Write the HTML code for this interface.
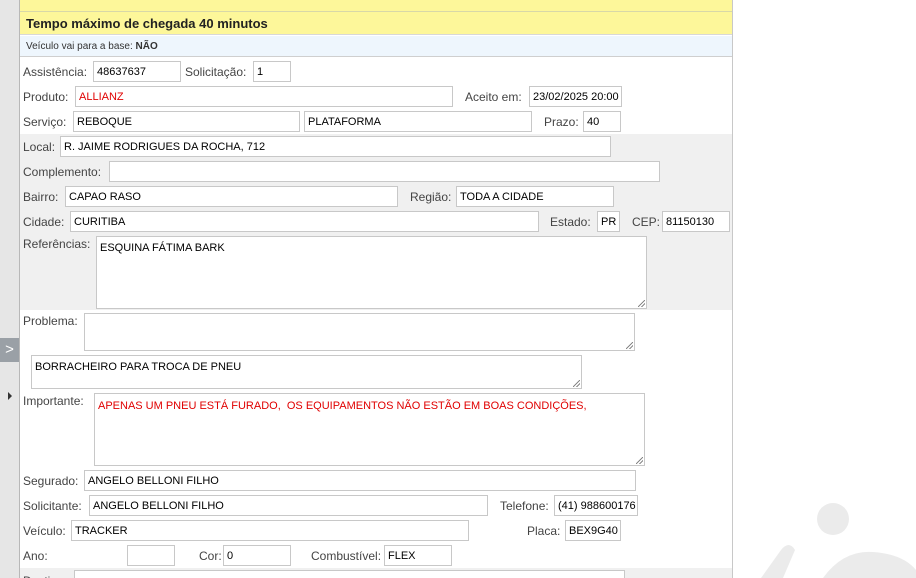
<!DOCTYPE html><html><head><style>
html,body{margin:0;width:916px;height:578px;overflow:hidden}
body{background:#fff;font-family:"Liberation Sans",Tahoma,sans-serif;position:relative}
.a{position:absolute}
.l{position:absolute;font-size:12px;color:#444;line-height:14px}
.i{position:absolute;border:1px solid #c8c8c8;background:#fff;font-size:11px;color:#000;box-sizing:border-box;padding:2px 3px 0;line-height:17px;height:21px;white-space:nowrap;overflow:hidden}
.r{color:#e00000}
.t{height:auto;line-height:13px}
.g{position:absolute;right:1px;bottom:1px;width:7px;height:7px;background:linear-gradient(135deg,transparent 45%,#888 45%,#888 55%,transparent 55%,transparent 70%,#888 70%,#888 80%,transparent 80%)}
</style></head><body>
<div class="a" style="left:0;top:0;width:19px;height:578px;background:#e6e6e6;border-right:1px solid #b8b8b8"></div>
<div class="a" style="left:0;top:338px;width:19px;height:24px;background:#9aa0a6;color:#fff;font-size:15px;text-align:center;line-height:24px">&gt;</div>
<div class="a" style="left:8px;top:392px;width:0;height:0;border-left:4px solid #333;border-top:4px solid transparent;border-bottom:4px solid transparent"></div>
<div class="a" style="left:20px;top:0;width:712px;height:578px;border-right:1px solid #c8c8c8"></div>
<div class="a" style="left:20px;top:0;width:712px;height:11px;background:#fdf79a;border-bottom:1px solid #d8d8a8"></div>
<div class="a" style="left:20px;top:12px;width:712px;height:23px;background:#fdf79a;border-bottom:1px solid #d8d8d8;font-weight:bold;font-size:13px;line-height:23px;color:#222;padding-left:6px;box-sizing:border-box">Tempo máximo de chegada 40 minutos</div>
<div class="a" style="left:20px;top:36px;width:712px;height:21px;background:#eef6fd;border-bottom:1px solid #cfcfcf;font-size:10px;line-height:21px;color:#333;padding-left:6px;box-sizing:border-box">Veículo vai para a base: <b>NÃO</b></div>
<div class="a" style="left:20px;top:134px;width:712px;height:176px;background:#f0f0f0"></div>
<div class="a" style="left:20px;top:568px;width:712px;height:10px;background:#f0f0f0"></div>

<div class="l" style="left:23px;top:65px">Assistência:</div><div class="i" style="left:93px;top:61px;width:88px">48637637</div>
<div class="l" style="left:185px;top:65px">Solicitação:</div><div class="i" style="left:253px;top:61px;width:38px">1</div>
<div class="l" style="left:23px;top:90px">Produto:</div><div class="i r" style="left:75px;top:86px;width:378px">ALLIANZ</div>
<div class="l" style="left:465px;top:90px">Aceito em:</div><div class="i" style="left:529px;top:86px;width:93px">23/02/2025 20:00</div>
<div class="l" style="left:23px;top:115px">Serviço:</div><div class="i" style="left:73px;top:111px;width:227px">REBOQUE</div>
<div class="i" style="left:304px;top:111px;width:228px">PLATAFORMA</div>
<div class="l" style="left:544px;top:115px">Prazo:</div><div class="i" style="left:583px;top:111px;width:38px">40</div>
<div class="l" style="left:23px;top:140px">Local:</div><div class="i" style="left:60px;top:136px;width:551px">R. JAIME RODRIGUES DA ROCHA, 712</div>
<div class="l" style="left:23px;top:165px">Complemento:</div><div class="i" style="left:109px;top:161px;width:551px"></div>
<div class="l" style="left:23px;top:190px">Bairro:</div><div class="i" style="left:65px;top:186px;width:333px">CAPAO RASO</div>
<div class="l" style="left:410px;top:190px">Região:</div><div class="i" style="left:456px;top:186px;width:158px">TODA A CIDADE</div>
<div class="l" style="left:23px;top:215px">Cidade:</div><div class="i" style="left:70px;top:211px;width:469px">CURITIBA</div>
<div class="l" style="left:550px;top:215px">Estado:</div><div class="i" style="left:597px;top:211px;width:23px">PR</div>
<div class="l" style="left:632px;top:215px">CEP:</div><div class="i" style="left:662px;top:211px;width:68px">81150130</div>
<div class="l" style="left:23px;top:237px">Referências:</div><div class="i t" style="left:96px;top:236px;width:551px;height:73px;padding-top:5px">ESQUINA FÁTIMA BARK<div class="g"></div></div>
<div class="l" style="left:23px;top:314px">Problema:</div><div class="i t" style="left:84px;top:313px;width:551px;height:38px"><div class="g"></div></div>
<div class="i t" style="left:31px;top:355px;width:551px;height:34px;padding-top:5px">BORRACHEIRO PARA TROCA DE PNEU<div class="g"></div></div>
<div class="l" style="left:23px;top:394px">Importante:</div><div class="i t r" style="left:94px;top:393px;width:551px;height:73px;padding-top:6px">APENAS UM PNEU ESTÁ FURADO,&nbsp; OS EQUIPAMENTOS NÃO ESTÃO EM BOAS CONDIÇÕES,<div class="g"></div></div>
<div class="l" style="left:23px;top:474px">Segurado:</div><div class="i" style="left:84px;top:470px;width:552px">ANGELO BELLONI FILHO</div>
<div class="l" style="left:23px;top:499px">Solicitante:</div><div class="i" style="left:89px;top:495px;width:399px">ANGELO BELLONI FILHO</div>
<div class="l" style="left:500px;top:499px">Telefone:</div><div class="i" style="left:554px;top:495px;width:84px">(41) 988600176</div>
<div class="l" style="left:23px;top:524px">Veículo:</div><div class="i" style="left:71px;top:520px;width:398px">TRACKER</div>
<div class="l" style="left:527px;top:524px">Placa:</div><div class="i" style="left:565px;top:520px;width:56px">BEX9G40</div>
<div class="l" style="left:23px;top:549px">Ano:</div><div class="i" style="left:127px;top:545px;width:48px"></div>
<div class="l" style="left:199px;top:549px">Cor:</div><div class="i" style="left:223px;top:545px;width:68px">0</div>
<div class="l" style="left:311px;top:549px">Combustível:</div><div class="i" style="left:384px;top:545px;width:68px">FLEX</div>
<div class="l" style="left:23px;top:574px">Destino:</div><div class="i" style="left:74px;top:570px;width:551px"></div>
<svg class="a" style="left:733px;top:440px" width="183" height="138"><circle cx="100" cy="79" r="16" fill="#ebebeb"/><path d="M28 138 L48 110 Q56 100 62 110 L50 138Z" fill="#ebebeb"/><path d="M90 138 Q110 110 140 112 Q170 114 183 130 L183 138Z" fill="#ebebeb"/></svg>
</body></html>
